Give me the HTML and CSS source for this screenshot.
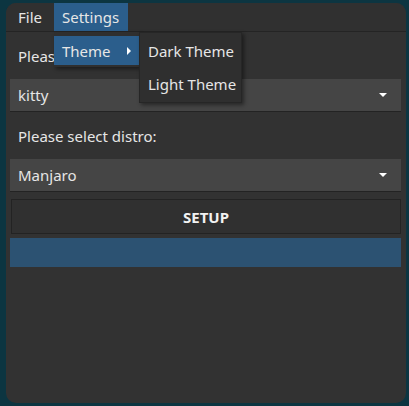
FILE: index.html
```html
<!DOCTYPE html>
<html>
<head>
<meta charset="utf-8">
<link rel="stylesheet" href="styles.css">
</head>
<body>
<div class="window">
  <div class="menubar">
    <span class="menu-title file">File</span>
    <span class="menu-title active">Settings</span>
  </div>
  <div class="content">
    <div class="label">Please select terminal:</div>
    <div class="combo"><span>kitty</span><span class="arrow"></span></div>
    <div class="label">Please select distro:</div>
    <div class="combo"><span>Manjaro</span><span class="arrow"></span></div>
    <div class="button">SETUP</div>
    <div class="progress"></div>
  </div>
  <div class="popup settings-menu">
    <div class="item active"><span>Theme</span><span class="sub-arrow"></span></div>
  </div>
  <div class="popup theme-menu">
    <div class="item">Dark Theme</div>
    <div class="item">Light Theme</div>
  </div>
</div>
</body>
</html>
```
FILE: styles.css
```css
html, body {
  margin: 0;
  padding: 0;
  background: #0c3541;
  width: 409px;
  height: 406px;
  overflow: hidden;
  font-family: "Noto Sans", "Open Sans", sans-serif;
  font-size: 15px;
  color: #e6e6e6;
}
.window {
  position: relative;
  margin: 3px 0 0 6px;
  width: 400px;
  height: 400px;
  background: #323232;
  border-radius: 10px;
  overflow: hidden;
}
.menubar {
  display: flex;
  height: 28px;
  background: #303030;
  border-bottom: 1px solid #242424;
  padding-left: 4px;
}
.menu-title {
  display: flex;
  align-items: center;
  padding: 0 8px;
  height: 28px;
}
.menu-title.file {
  padding-right: 12px;
}
.menu-title.active {
  background: #2b5e8c;
  width: 58px;
}
.content {
  display: flex;
  flex-direction: column;
  padding: 0 5px 0 4px;
}
.label {
  height: 47px;
  display: flex;
  align-items: center;
  padding-left: 8px;
}
.combo {
  height: 32px;
  background: #454545;
  border-bottom: 1px solid #232323;
  display: flex;
  align-items: center;
  justify-content: space-between;
  padding: 0 14px 0 8px;
}
.arrow {
  width: 0;
  height: 0;
  border-left: 4px solid transparent;
  border-right: 4px solid transparent;
  border-top: 4px solid #ffffff;
}
.button {
  margin-top: 7px;
  margin-left: 1px;
  height: 33px;
  border: 1px solid #232323;
  background: #303030;
  display: flex;
  align-items: center;
  justify-content: center;
  font-weight: bold;
  font-size: 15px;
  color: #f2f2f2;
}
.progress {
  margin-top: 4px;
  height: 29px;
  background: #2c5272;
}
.popup {
  position: absolute;
  background: #2f2f2f;
  box-shadow: 2px 2px 4px rgba(0,0,0,0.45);
}
.settings-menu {
  left: 48px;
  top: 29px;
  width: 85px;
  padding: 4px 0 2px;
}
.settings-menu .item {
  height: 29px;
  display: flex;
  align-items: center;
  justify-content: space-between;
  padding: 0 8px;
  background: #2b5e8c;
}
.sub-arrow {
  width: 0;
  height: 0;
  border-top: 4px solid transparent;
  border-bottom: 4px solid transparent;
  border-left: 4px solid #ffffff;
}
.theme-menu {
  left: 133px;
  top: 29px;
  width: 101px;
  padding: 1px 0 2px;
  border: 1px solid #262626;
}
.theme-menu .item {
  height: 33px;
  display: flex;
  align-items: center;
  padding-left: 8px;
}
```
